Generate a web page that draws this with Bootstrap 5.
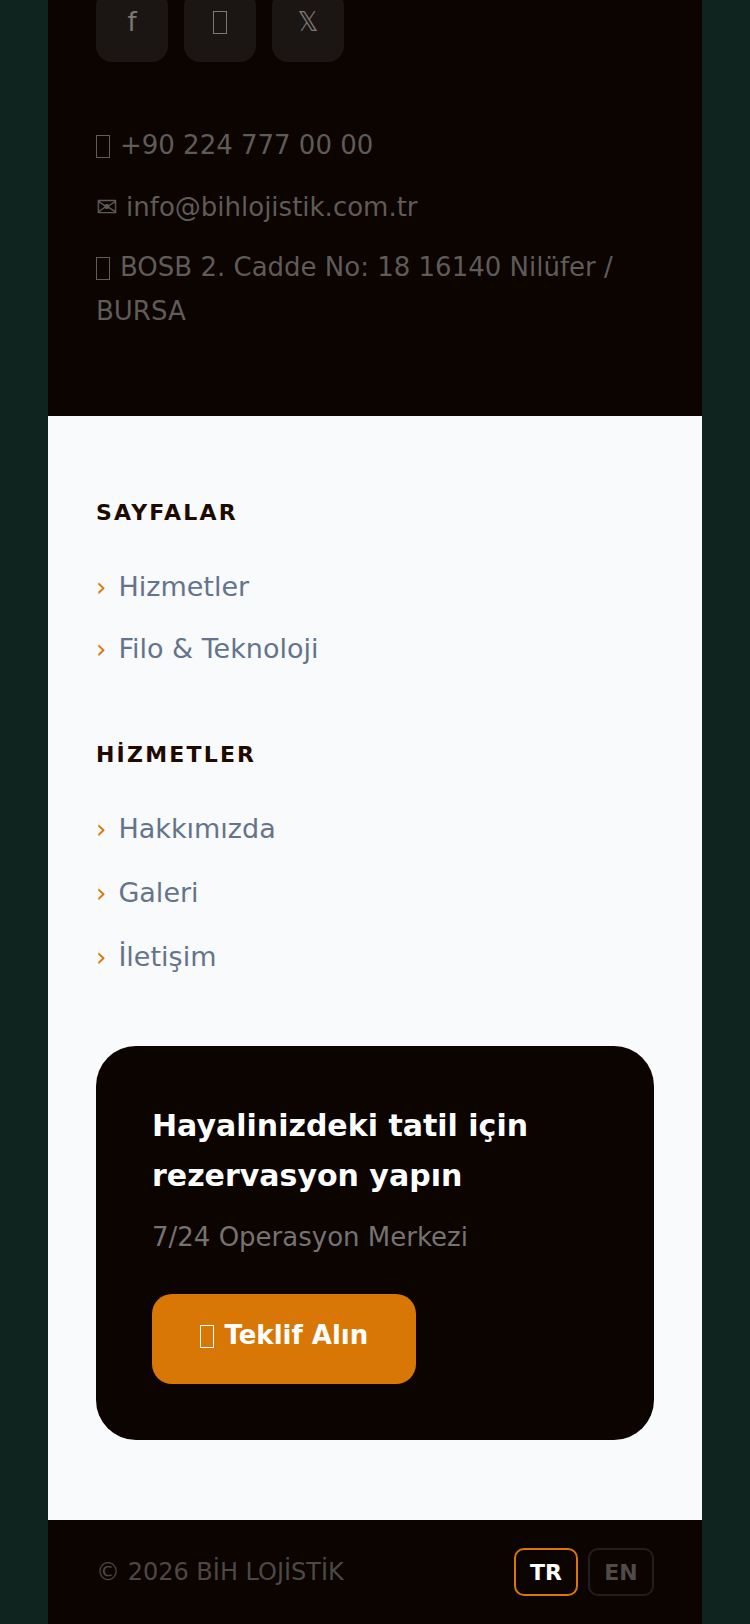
<!DOCTYPE html>
<html lang="tr">

<head>
  <meta charset="UTF-8">
  <meta name="viewport" content="width=device-width, initial-scale=1.0">
  <title>BİH Lojistik</title>
  <link href="https://cdn.jsdelivr.net/npm/bootstrap@5.3.0/dist/css/bootstrap.min.css" rel="stylesheet">
  <style>
    html, body {
      height: 1624px;
      overflow: hidden;
    }

    body {
      background-color: #10241f;
      font-family: "DejaVu Sans", sans-serif;
    }

    .site-panel {
      width: 654px;
      margin: 0 auto;
    }

    /* box the missing-emoji glyph shows as */
    .tofu {
      display: inline-block;
      width: 14px;
      height: 23px;
      margin-right: 1.7px;
      border: 1.5px solid currentColor;
      vertical-align: -4px;
    }

    .foot-top {
      display: flow-root;
      background-color: #0b0401;
      height: 416px;
      padding: 0 48px;
      color: #5f5b58;
      font-size: 26px;
      line-height: 44px;
    }

    .social-row {
      margin-top: -10px;
      margin-bottom: 61px;
    }

    .social-btn {
      width: 72px;
      height: 72px;
      border-radius: 16px;
      background-color: #1b1614;
      color: #7c7875;
      font-size: 26px;
      padding-bottom: 8px;
      text-decoration: none;
    }

    .social-btn .tofu {
      margin: 0;
    }

    .contact-line {
      margin-bottom: 16px;
    }

    .contact-phone {
      margin-bottom: 18px;
    }

    .foot-links {
      background-color: #f8fafc;
      height: 1104px;
      padding: 80px 48px 0;
    }

    .links-title {
      color: #1f0a00;
      font-size: 22px;
      font-weight: 700;
      letter-spacing: 2.2px;
      line-height: 34px;
      margin-bottom: 35px;
    }

    .link-stack {
      display: flex;
      flex-direction: column;
      align-items: flex-start;
      gap: 18px;
      margin-bottom: 67px;
    }

    .link-stack-wide {
      gap: 20px;
    }

    .link-item {
      color: #64748b;
      font-size: 27px;
      line-height: 44px;
      text-decoration: none;
    }

    .link-item span {
      color: #d97706;
      margin-right: 12px;
      font-size: 26px;
    }

    .cta-box {
      background-color: #0b0401;
      border-radius: 40px;
      padding: 55px 56px 0;
      height: 394px;
    }

    .cta-title {
      color: #fff;
      font-size: 30px;
      font-weight: 700;
      line-height: 50px;
      margin-bottom: 14px;
    }

    .cta-sub {
      color: #767270;
      font-size: 26px;
      line-height: 44px;
      margin-bottom: 35px;
    }

    .cta-btn {
      background-color: #d97706;
      color: #fff;
      font-size: 26px;
      font-weight: 700;
      width: 264px;
      height: 90px;
      border-radius: 20px;
      padding: 0 0 8px;
      border: 0;
    }

    .foot-bottom {
      background-color: #0b0401;
      height: 104px;
      padding: 0 48px;
      color: #4c4846;
      font-size: 24px;
    }

    .lang-btn {
      background: transparent;
      height: 48px;
      width: 66px;
      border: 2px solid #231e1c;
      border-radius: 10px;
      color: #4f4b48;
      font-size: 22px;
      font-weight: 700;
      padding: 0;
    }

    .lang-btn.is-on {
      width: 64px;
      border-color: #d97706;
      color: #fff;
    }

    .lang-group {
      gap: 10px;
    }
  </style>
</head>

<body>
  <div class="site-panel">
    <div class="foot-top">
      <div class="d-flex gap-3 social-row">
        <a href="#" class="social-btn d-flex align-items-center justify-content-center">f</a>
        <a href="#" class="social-btn d-flex align-items-center justify-content-center"><span class="tofu"></span></a>
        <a href="#" class="social-btn d-flex align-items-center justify-content-center">𝕏</a>
      </div>
      <div class="contact-line contact-phone"><span class="tofu"></span> +90 224 777 00 00</div>
      <div class="contact-line">✉ info@bihlojistik.com.tr</div>
      <div class="contact-line"><span class="tofu"></span> BOSB 2. Cadde No: 18 16140 Nilüfer / BURSA</div>
    </div>

    <div class="foot-links">
      <div class="links-title">SAYFALAR</div>
      <div class="link-stack">
        <a href="#" class="link-item"><span>›</span>Hizmetler</a>
        <a href="#" class="link-item"><span>›</span>Filo &amp; Teknoloji</a>
      </div>
      <div class="links-title">HİZMETLER</div>
      <div class="link-stack link-stack-wide">
        <a href="#" class="link-item"><span>›</span>Hakkımızda</a>
        <a href="#" class="link-item"><span>›</span>Galeri</a>
        <a href="#" class="link-item"><span>›</span>İletişim</a>
      </div>
      <div class="cta-box">
        <div class="cta-title">Hayalinizdeki tatil için rezervasyon yapın</div>
        <div class="cta-sub">7/24 Operasyon Merkezi</div>
        <button type="button" class="btn cta-btn"><span class="tofu"></span> Teklif Alın</button>
      </div>
    </div>

    <div class="foot-bottom d-flex align-items-center justify-content-between">
      <span>© 2026 BİH LOJİSTİK</span>
      <div class="d-flex lang-group">
        <button type="button" class="btn lang-btn is-on">TR</button>
        <button type="button" class="btn lang-btn">EN</button>
      </div>
    </div>
  </div>

  <script src="https://cdn.jsdelivr.net/npm/bootstrap@5.3.0/dist/js/bootstrap.bundle.min.js"></script>
</body>

</html>
